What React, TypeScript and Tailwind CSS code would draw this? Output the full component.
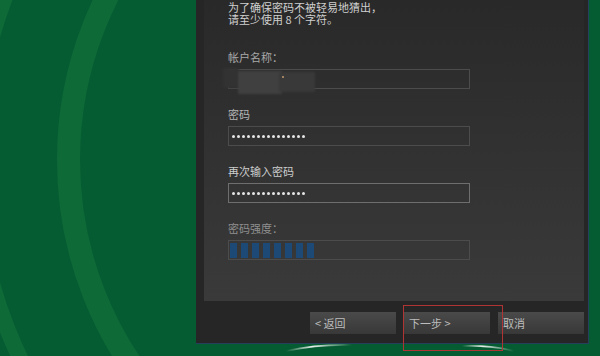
import React from 'react';

const Dots = () => (
  <div className="flex items-center gap-[2px] pl-[3px]">
    {Array.from({ length: 15 }).map((_, i) => (
      <span key={i} className="w-[3px] h-[3px] rounded-full bg-[#e6e6e6]" />
    ))}
  </div>
);

const Field = ({ children, focused }: { children?: React.ReactNode; focused?: boolean }) => (
  <div
    className={`relative w-[242px] h-[20px] border flex items-center ${
      focused ? 'border-[#6e6e6e]' : 'border-[#4c4c4c]'
    }`}
  >
    {children}
  </div>
);

const Label = ({ text, tone }: { text: string; tone: string }) => (
  <div className={`h-[12px] mb-[6px] text-[11px] leading-[12px] ${tone}`}>{text}</div>
);

const Button = ({ text }: { text: string }) => (
  <div className="w-[86px] h-[22px] flex items-center pl-[5px] text-[11px] text-[#bdbdbd] bg-gradient-to-b from-[#4a4a4a] to-[#383838]">
    {text}
  </div>
);

export default function App() {
  return (
    <div className="relative w-[600px] h-[356px] overflow-hidden bg-[#065c32] font-['Noto_Sans_CJK_SC','Liberation_Sans',sans-serif]">
      {/* background rings and glints */}
      <svg className="absolute inset-0" width="600" height="356" viewBox="0 0 600 356">
        <defs>
          <linearGradient id="glint" x1="0" x2="1" y1="0" y2="0">
            <stop offset="0" stopColor="#fff" stopOpacity="0" />
            <stop offset="0.4" stopColor="#fff" stopOpacity="0.9" />
            <stop offset="1" stopColor="#fff" stopOpacity="0" />
          </linearGradient>
        </defs>
        <circle cx="433" cy="160" r="364.5" fill="none" stroke="#0e6b38" strokeWidth="23" />
        <circle cx="433" cy="160" r="458" fill="none" stroke="#0e6b38" strokeWidth="16" />
        <path d="M286 351 Q318 344 352 345" fill="none" stroke="url(#glint)" strokeWidth="1.6" />
        <path d="M462 346 Q490 345 514 351" fill="none" stroke="url(#glint)" strokeWidth="1.6" />
      </svg>

      {/* dialog window */}
      <div className="relative ml-[196px] w-[393px] h-[344px] bg-[#262626] border-r border-b border-[#24405a] flex flex-col pl-[8px] pr-[4px]">
        <div className="h-[301px] bg-gradient-to-b from-[#292929] to-[#3a3a3a] pl-[24px] pt-[1px] flex flex-col">
          <div className="text-[11px] leading-[12px] text-[#cfcfcf]">
            <div>为了确保密码不被轻易地猜出，</div>
            <div>请至少使用 8 个字符。</div>
          </div>

          <div className="mt-[26px]">
            <Label text="帐户名称：" tone="text-[#a9a9a9]" />
            <Field>
              <div className="absolute left-[-6px] top-[-2px] w-[16px] h-[20px] bg-[#323232] blur-[1px]" />
              <div className="absolute left-[9px] top-[1px] w-[44px] h-[23px] bg-[#404040] blur-[1px]" />
              <div className="absolute left-[50px] top-[2px] w-[36px] h-[20px] bg-[#393939] blur-[1px]" />
              <div className="absolute left-[53px] top-[6px] w-[2px] h-[2px] bg-[#a08060]" />
            </Field>
          </div>

          <div className="mt-[19px]">
            <Label text="密码" tone="text-[#b5b5b5]" />
            <Field>
              <Dots />
            </Field>
          </div>

          <div className="mt-[19px]">
            <Label text="再次输入密码" tone="text-[#cdcdcd]" />
            <Field focused>
              <Dots />
            </Field>
          </div>

          <div className="mt-[19px]">
            <Label text="密码强度：" tone="text-[#8f8f8f]" />
            <Field>
              <div className="flex gap-[4px] pl-[1px] pt-[1px]">
                {Array.from({ length: 8 }).map((_, i) => (
                  <span key={i} className="w-[7px] h-[15px] bg-[#1d4977]" />
                ))}
              </div>
            </Field>
          </div>
        </div>

        <div className="flex justify-end gap-[8px] mt-[11px]">
          <Button text="< 返回" />
          <Button text="下一步 >" />
          <Button text="取消" />
        </div>
      </div>

      {/* highlight annotation */}
      <div className="absolute left-[403px] top-[305px] w-[100px] h-[46px] border border-[#b03434]" />
    </div>
  );
}
